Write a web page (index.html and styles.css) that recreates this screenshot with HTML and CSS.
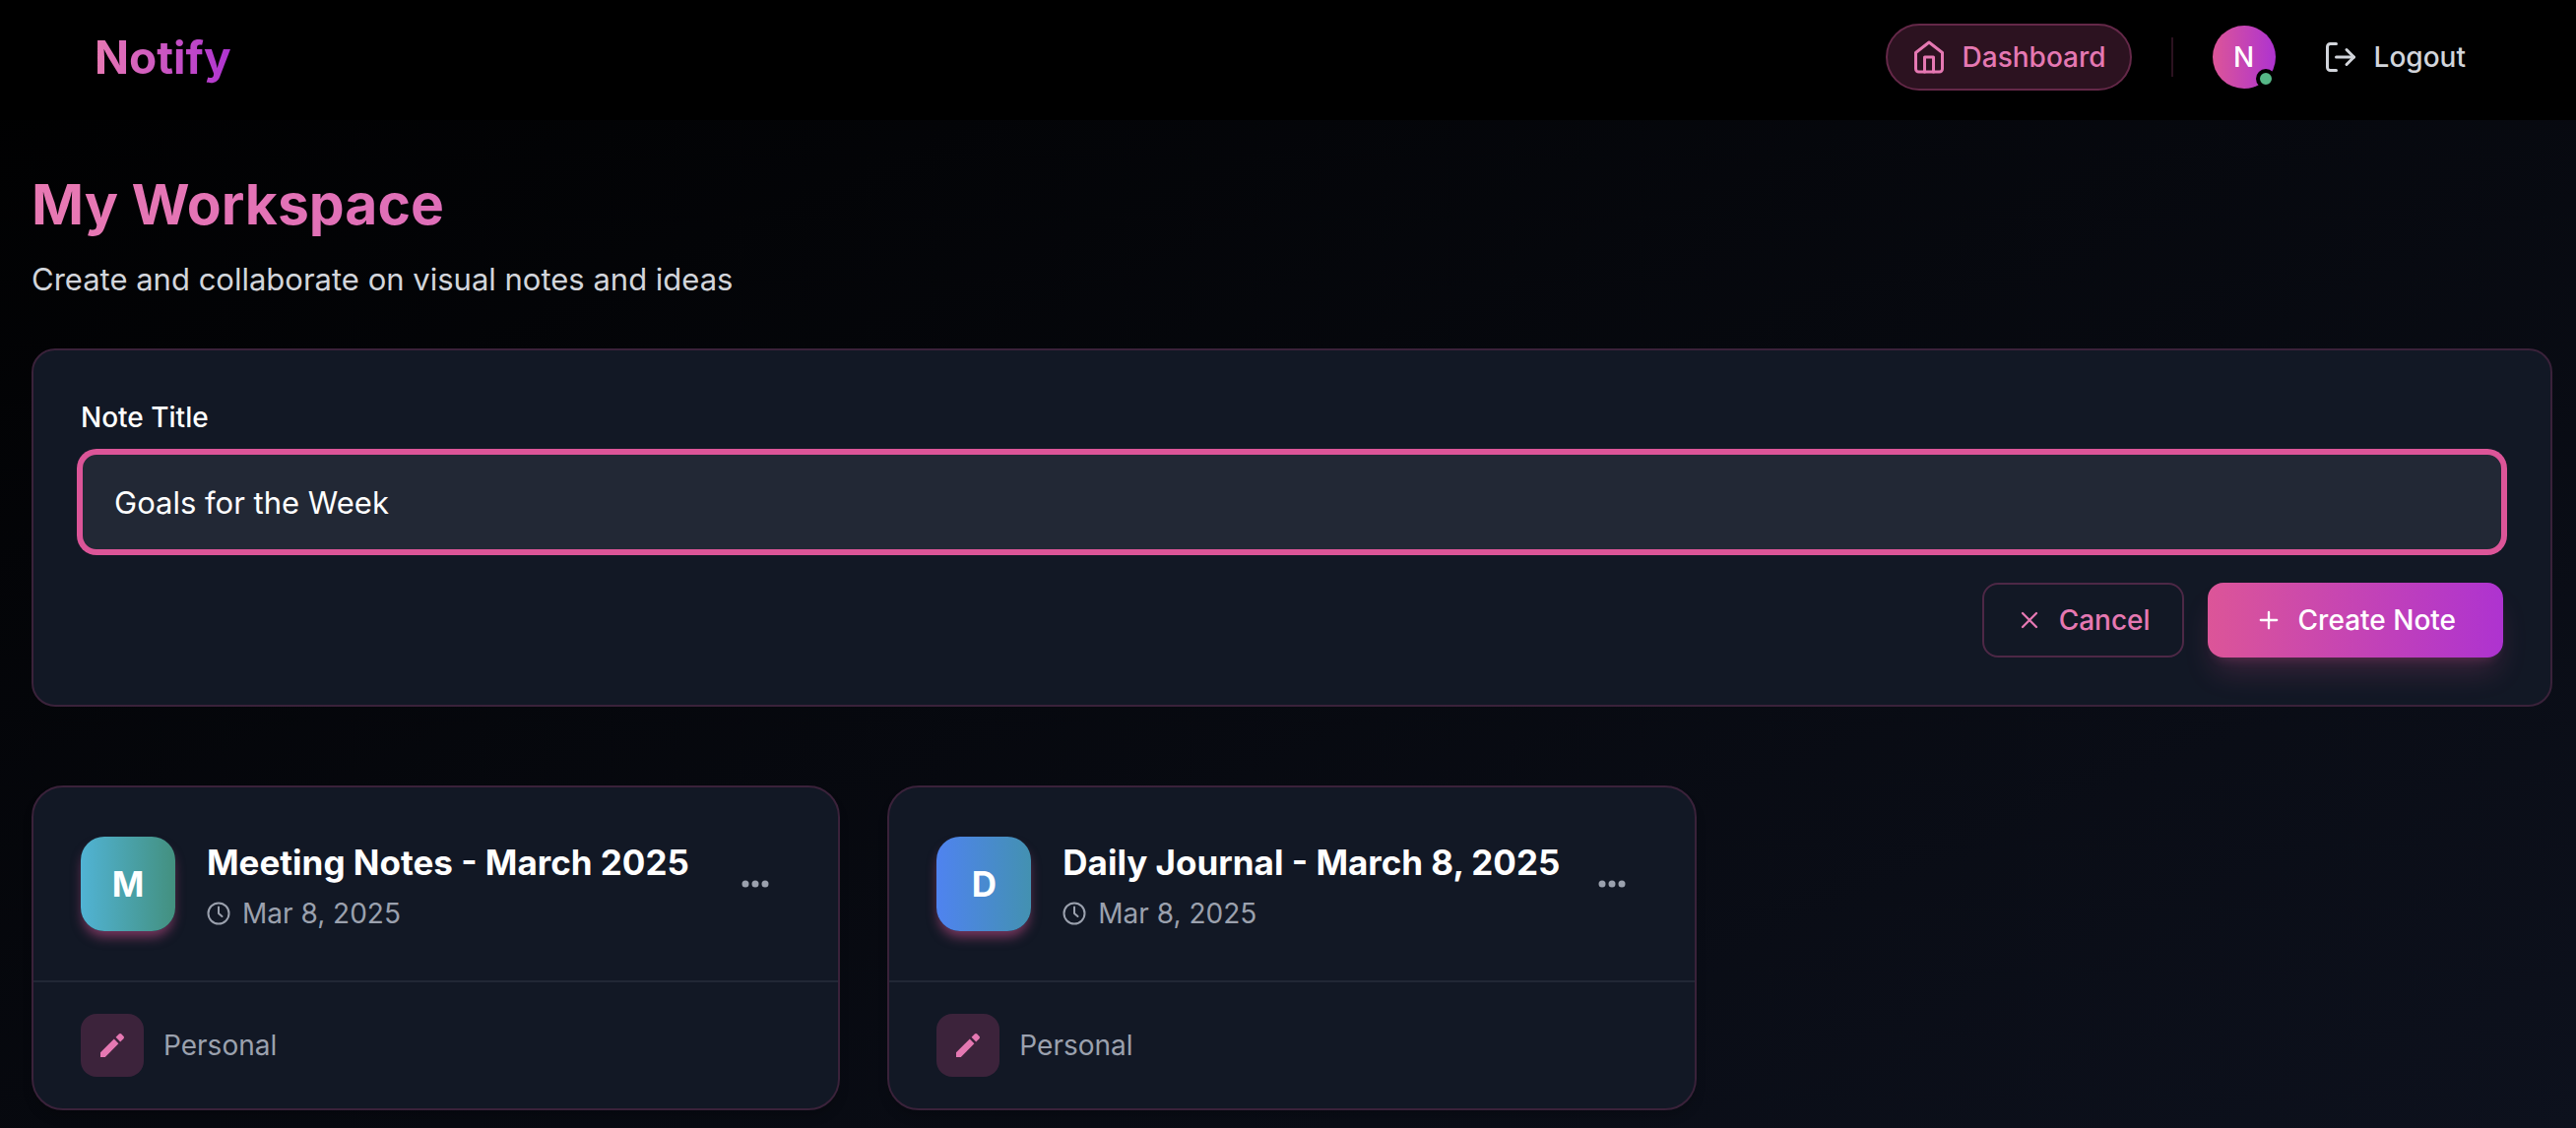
FILE: index.html
```html
<!DOCTYPE html>
<html lang="en">
<head>
<meta charset="utf-8">
<meta name="viewport" content="width=device-width, initial-scale=1">
<title>Notify – My Workspace</title>
<link rel="stylesheet" href="styles.css">
</head>
<body>
<header class="topbar">
  <a class="brand" href="#">Notify</a>
  <nav class="nav" aria-label="Main">
    <a class="nav-pill" href="#">
      <svg class="icon-lg" viewBox="0 0 24 24" fill="none" stroke="currentColor" stroke-width="2" stroke-linejoin="round" stroke-linecap="round"><path d="M3 9l9-7 9 7v11a2 2 0 0 1-2 2H5a2 2 0 0 1-2-2z"/><path d="M9 22V12h6v10"/></svg>
      Dashboard
    </a>
    <span class="nav-divider"></span>
    <span class="user">N<span class="status"></span></span>
    <button class="logout" type="button">
      <svg class="icon-lg" viewBox="0 0 24 24" fill="none" stroke="currentColor" stroke-width="2" stroke-linejoin="round" stroke-linecap="round"><path d="M9 21H5a2 2 0 0 1-2-2V5a2 2 0 0 1 2-2h4"/><path d="M16 17l5-5-5-5"/><path d="M21 12H9"/></svg>
      Logout
    </button>
  </nav>
</header>
<main class="page">
  <h1 class="title">My Workspace</h1>
  <p class="subtitle">Create and collaborate on visual notes and ideas</p>

  <form class="panel">
    <label class="label" for="note-title">Note Title</label>
    <input class="field" id="note-title" type="text" value="Goals for the Week">
    <div class="actions">
      <button class="btn btn-outline" type="button">
        <svg class="icon-md" viewBox="0 0 24 24" fill="none" stroke="currentColor" stroke-width="2" stroke-linecap="round"><path d="M18 6L6 18M6 6l12 12"/></svg>
        Cancel
      </button>
      <button class="btn btn-primary" type="submit">
        <svg class="icon-md" viewBox="0 0 24 24" fill="none" stroke="currentColor" stroke-width="2" stroke-linecap="round"><path d="M12 5v14M5 12h14"/></svg>
        Create Note
      </button>
    </div>
  </form>

  <section class="notes" aria-label="Notes">
    <article class="note">
      <div class="note-head">
        <span class="badge badge-teal">M</span>
        <div class="note-info">
          <h2 class="note-title">Meeting Notes - March 2025</h2>
          <p class="note-date">
            <svg class="icon-sm" viewBox="0 0 24 24" fill="none" stroke="currentColor" stroke-width="2" stroke-linecap="round" stroke-linejoin="round"><circle cx="12" cy="12" r="10.500"/><path d="M12 5.500V12l3.500 3"/></svg>
            Mar 8, 2025
          </p>
        </div>
        <button class="more" type="button" aria-label="More options">
          <svg class="icon-dots" viewBox="0 0 32 32" fill="currentColor"><circle cx="6" cy="16" r="3.500"/><circle cx="16" cy="16" r="3.500"/><circle cx="26" cy="16" r="3.500"/></svg>
        </button>
      </div>
      <div class="note-foot">
        <span class="tag-icon"><svg class="icon-sm" viewBox="0 0 24 24" fill="currentColor"><path d="M0 19.200V24h4.800L18.400 10.200l-4.600-4.600z"/><path d="M15.600 3.800l4.600 4.600 3.200-3.200a1.800 1.800 0 0 0 0-2.500L21.300.6a1.800 1.800 0 0 0-2.500 0z"/></svg></span>
        Personal
      </div>
    </article>
    <article class="note">
      <div class="note-head">
        <span class="badge badge-blue">D</span>
        <div class="note-info">
          <h2 class="note-title">Daily Journal - March 8, 2025</h2>
          <p class="note-date">
            <svg class="icon-sm" viewBox="0 0 24 24" fill="none" stroke="currentColor" stroke-width="2" stroke-linecap="round" stroke-linejoin="round"><circle cx="12" cy="12" r="10.500"/><path d="M12 5.500V12l3.500 3"/></svg>
            Mar 8, 2025
          </p>
        </div>
        <button class="more" type="button" aria-label="More options">
          <svg class="icon-dots" viewBox="0 0 32 32" fill="currentColor"><circle cx="6" cy="16" r="3.500"/><circle cx="16" cy="16" r="3.500"/><circle cx="26" cy="16" r="3.500"/></svg>
        </button>
      </div>
      <div class="note-foot">
        <span class="tag-icon"><svg class="icon-sm" viewBox="0 0 24 24" fill="currentColor"><path d="M0 19.200V24h4.800L18.400 10.200l-4.600-4.600z"/><path d="M15.600 3.800l4.600 4.600 3.200-3.200a1.800 1.800 0 0 0 0-2.500L21.300.6a1.800 1.800 0 0 0-2.500 0z"/></svg></span>
        Personal
      </div>
    </article>
  </section>
</main>
</body>
</html>
```
FILE: styles.css
```css
*, *::before, *::after { box-sizing: border-box; }

body {
  margin: 0;
  min-height: 100vh;
  font-family: Inter, "Liberation Sans", sans-serif;
  font-size: 28px;
  line-height: 40px;
  color: #fff;
  background: linear-gradient(to bottom right, #000 0%, #0d111d 100%) fixed;
}

h1, h2, p { margin: 0; }
button, input { font: inherit; color: inherit; }
button { cursor: pointer; border: 0; background: none; padding: 0; }
a { color: inherit; text-decoration: none; }
svg { display: block; flex: none; }

.icon-lg { width: 36px; height: 36px; }
.icon-md { width: 28px; height: 28px; }
.icon-sm { width: 24px; height: 24px; }
.icon-dots { width: 32px; height: 32px; }

.topbar {
  display: flex;
  align-items: center;
  justify-content: space-between;
  height: 122px;
  padding: 0 112px 6px 96px;
  background: #000;
}

.brand {
  font-size: 46px;
  line-height: 64px;
  font-weight: 700;
  color: transparent;
  background: linear-gradient(to right, #e879b3, #ae33d0);
  background-clip: text;
}

.nav { display: flex; align-items: center; }

.nav-pill {
  display: flex;
  align-items: center;
  gap: 16px;
  height: 68px;
  padding: 0 24px;
  border: 2px solid #642848;
  border-radius: 34px;
  background: #2c1220;
  color: #e578b2;
  font-weight: 500;
}

.nav-divider { width: 2px; height: 40px; margin: 0 40px; background: #2c1220; }

.user {
  position: relative;
  width: 64px;
  height: 64px;
  border-radius: 50%;
  background: linear-gradient(to right, #dc5598, #ae33d0);
  line-height: 64px;
  text-align: center;
  font-weight: 500;
}

.status {
  position: absolute;
  right: 0;
  bottom: 0;
  width: 20px;
  height: 20px;
  border: 4px solid #000;
  border-radius: 50%;
  background: #56b887;
}

.logout {
  display: flex;
  align-items: center;
  gap: 16px;
  margin-left: 48px;
  color: #d2d5db;
  font-weight: 500;
}

.page { padding: 50px 24px 18px 32px; }

.title {
  font-size: 57px;
  line-height: 72px;
  font-weight: 700;
  color: transparent;
  background: linear-gradient(to right, #e879b3, #ae33d0);
  background-clip: text;
}

.subtitle {
  margin-top: 16px;
  font-size: 31px;
  line-height: 48px;
  color: #d2d5db;
}

.panel {
  display: flex;
  flex-direction: column;
  margin-top: 46px;
  padding: 48px;
  border: 2px solid #3a223a;
  border-radius: 24px;
  background: #121825;
}

.label { font-weight: 500; }

.field {
  width: 100%;
  height: 100px;
  margin-top: 16px;
  padding: 0 32px;
  border: 2px solid #dc5598;
  border-radius: 16px;
  outline: 0;
  box-shadow: 0 0 0 4px #dc5598;
  background: #222835;
  font-size: 31px;
}

.actions {
  display: flex;
  justify-content: flex-end;
  gap: 24px;
  margin-top: 32px;
}

.btn {
  display: flex;
  align-items: center;
  gap: 16px;
  height: 76px;
  border-radius: 16px;
  font-weight: 500;
}

.btn-outline { padding: 0 32px; border: 2px solid #4d2846; color: #e578b2; }

.btn-primary {
  padding: 0 48px;
  background: linear-gradient(to right, #dc5598, #ae33d0);
  box-shadow: 0 20px 30px -6px rgba(220, 85, 152, .2), 0 8px 12px -8px rgba(220, 85, 152, .3);
}

.notes {
  display: grid;
  grid-template-columns: repeat(3, 1fr);
  gap: 48px;
  margin-top: 80px;
}

.note {
  border: 2px solid #3a223a;
  border-radius: 32px;
  background: #121825;
  box-shadow: 0 8px 12px -2px rgba(0, 0, 0, .2);
}

.note-head { display: flex; align-items: center; padding: 48px; }

.badge {
  flex: none;
  width: 96px;
  height: 96px;
  border-radius: 24px;
  box-shadow: 0 8px 12px -2px rgba(220, 85, 152, .5);
  font-size: 35px;
  line-height: 96px;
  font-weight: 700;
  text-align: center;
}

.badge-teal { background: linear-gradient(to right, #51b3d4, #43907f); }
.badge-blue { background: linear-gradient(to right, #4f83f0, #4391b1); }

.note-info { flex: 1; min-width: 0; margin-left: 32px; }

.note-title {
  font-size: 35px;
  line-height: 56px;
  font-weight: 700;
  white-space: nowrap;
}

.note-date {
  display: flex;
  align-items: center;
  gap: 12px;
  margin-top: 4px;
  color: #9ba1ae;
}

.more { flex: none; padding: 20px; color: #9ba1ae; }

.note-foot {
  display: flex;
  align-items: center;
  gap: 20px;
  padding: 32px 48px;
  border-top: 2px solid #212735;
  color: #9ba1ae;
}

.tag-icon {
  display: grid;
  place-items: center;
  width: 64px;
  height: 64px;
  border-radius: 16px;
  background: #3c233b;
  color: #e578b2;
}
```
